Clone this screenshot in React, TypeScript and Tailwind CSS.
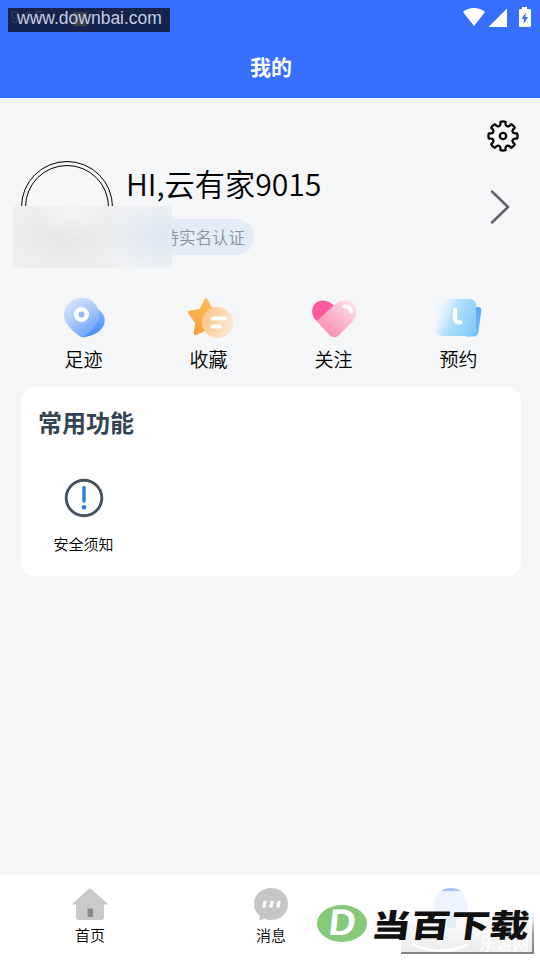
import type { ReactNode } from "react";

const TEETH = 8;

// contour of the settings gear, one tooth after the other
function gearPath() {
    const point = (r: number, deg: number) => {
        const a = ((deg - 90) * Math.PI) / 180;
        return `${(16 + r * Math.cos(a)).toFixed(2)} ${(16 + r * Math.sin(a)).toFixed(2)}`;
    };
    let d = "";
    for (let i = 0; i < TEETH; i++) {
        const c = (i * 360) / TEETH;
        d += `${i === 0 ? "M" : "L"}${point(14.4, c - 10)}`;
        d += `Q${point(15, c)} ${point(14.4, c + 10)}`;
        d += `L${point(12.2, c + 12)}`;
        d += `Q${point(9, c + 22.5)} ${point(12.2, c + 33)}`;
    }
    return d + "Z";
}

function GearIcon() {
    return (
        <svg width="32" height="32" viewBox="0 0 32 32" fill="none" stroke="#050505" strokeWidth="2.300" strokeLinejoin="round">
            <path d={gearPath()} />
            <circle cx="16" cy="16" r="3.2" />
        </svg>
    );
}

function FootprintIcon() {
    return (
        <svg width="50" height="46" viewBox="0 0 50 46">
            <defs>
                <linearGradient id="pinBack" x1="0" y1="0" x2="0" y2="1">
                    <stop offset="0" stopColor="#8fb0f5" />
                    <stop offset="1" stopColor="#3f8bfb" />
                </linearGradient>
                <linearGradient id="pinFront" x1="0.1" y1="0" x2="0.7" y2="1">
                    <stop offset="0" stopColor="#dce9fd" />
                    <stop offset="0.5" stopColor="#abcafa" />
                    <stop offset="1" stopColor="#65a3fb" />
                </linearGradient>
            </defs>
            <path d="M36 13c6 2 10 7 9.700 13-.5 10-11 15-22.500 16.500z" fill="url(#pinBack)" />
            <path d="M5 20C5 10 13 3 23 3s17 7 17 17c0 9-8 16-13.500 21-2 1.800-4 1.800-6 0C14 36 5 29 5 20z" fill="url(#pinFront)" />
            <circle cx="22.500" cy="19.500" r="5.200" fill="#91b7f6" stroke="#fff" strokeWidth="4.600" />
        </svg>
    );
}

function FavoriteIcon() {
    return (
        <svg width="50" height="46" viewBox="0 0 50 46">
            <defs>
                <linearGradient id="starFill" x1="0" y1="0" x2="0" y2="1">
                    <stop offset="0" stopColor="#f9bd58" />
                    <stop offset="1" stopColor="#f7a13b" />
                </linearGradient>
                <linearGradient id="bubbleFill" x1="0" y1="0.2" x2="1" y2="0.6">
                    <stop offset="0" stopColor="#fbc68b" />
                    <stop offset="1" stopColor="#fde5cf" />
                </linearGradient>
            </defs>
            <path d="M22 5L26.500 14L38 16L31 26L31.500 37L21 34L11.500 38.500L13 27.500L5.500 17.500L17 15.500Z" fill="url(#starFill)" stroke="url(#starFill)" strokeWidth="3.500" strokeLinejoin="round" />
            <circle cx="33.500" cy="27.500" r="15.500" fill="url(#bubbleFill)" fillOpacity="0.95" />
            <path d="M28.500 23.500H41M28.500 31.500H36" stroke="#fff" strokeWidth="4" strokeLinecap="round" />
        </svg>
    );
}

function FollowIcon() {
    return (
        <svg width="50" height="46" viewBox="0 0 50 46">
            <defs>
                <linearGradient id="heartFill" x1="0.900" y1="0" x2="0.2" y2="0.800">
                    <stop offset="0" stopColor="#fde6ee" />
                    <stop offset="0.550" stopColor="#fcb7ce" />
                    <stop offset="1" stopColor="#fb91b5" />
                </linearGradient>
            </defs>
            <path d="M7.500 26C1 20 2 9.500 9 6.500c6-2.500 12-.5 17 5L16 24z" fill="#fb599b" />
            <path d="M7.500 26L26 9.500C32 3.500 41 4 45 9.500c4 5.500 3 12-1.500 17L30 40c-3 3-6.500 3-9.500 0z" fill="url(#heartFill)" />
            <path d="M35.500 11.500c4-.5 6 1.500 6.500 5" fill="none" stroke="#fff" strokeWidth="3.600" strokeLinecap="round" />
        </svg>
    );
}

function BookingIcon() {
    return (
        <svg width="50" height="46" viewBox="0 0 50 46">
            <defs>
                <linearGradient id="folderFill" x1="0" y1="0.300" x2="1" y2="0.700">
                    <stop offset="0" stopColor="#e6f4fd" stopOpacity="0.100" />
                    <stop offset="0.400" stopColor="#b5e0fc" />
                    <stop offset="1" stopColor="#83cbfa" />
                </linearGradient>
                <linearGradient id="folderBack" x1="0" y1="0" x2="0" y2="1">
                    <stop offset="0" stopColor="#5aa5f2" />
                    <stop offset="1" stopColor="#75c3fa" />
                </linearGradient>
            </defs>
            <path d="M39 12h5c2.500 0 3.500 1.500 3.200 4l-2.700 21c-.5 3-2 4.500-5 4.500H32z" fill="url(#folderBack)" />
            <rect x="2" y="4" width="40" height="37" rx="6" fill="url(#folderFill)" />
            <path d="M21 14.500v8.500c0 3.500 1.500 4.500 5.500 4.500" fill="none" stroke="#fff" strokeWidth="4.200" strokeLinecap="round" />
        </svg>
    );
}

function Shortcut({ icon, label }: { icon: ReactNode; label: string }) {
    return (
        <div className="flex w-[125px] flex-col items-center">
            {icon}
            <span className="mt-1 text-[19px] leading-7 font-[350] text-black">{label}</span>
        </div>
    );
}

function StatusBar() {
    return (
        <div className="flex h-9 justify-end pr-[9px] pt-[7px]">
            <svg width="70" height="22" viewBox="0 0 70 22" fill="#fff">
                <path d="M2 5C8-.5 18-.5 24 5L13 19z" />
                <path d="M46 1.500V20H27.500z" />
                <path d="M61 0h5v2h2.500c1 0 1.500.500 1.500 1.500v15c0 1-.5 1.500-1.500 1.500h-9c-1 0-1.500-.5-1.500-1.500v-15c0-1 .5-1.500 1.500-1.500H61z" />
                <path d="M65 5l-4.500 7H63l-.5 5 4.500-7h-2.800z" fill="#366ffe" />
            </svg>
        </div>
    );
}

export default function App() {
    return (
        <div className="relative flex h-[960px] w-[540px] flex-col overflow-hidden bg-[#f4f6f8] font-['Noto_Sans_CJK_SC',sans-serif]">
            <header className="h-[98px] bg-[#366ffe]">
                <StatusBar />
                <h1 className="pl-0.5 pt-[15px] text-center text-[21px] leading-[30px] font-bold text-white">我的</h1>
            </header>

            <main className="flex flex-1 flex-col">
                <div className="flex justify-end pr-[21px] pt-[22px]">
                    <GearIcon />
                </div>

                {/* Profil */}
                <section className="mt-2 flex h-[108px] items-start pl-[21px]">
                    <div className="mt-px size-[92px] shrink-0 rounded-full border border-black p-[3px]">
                        <div className="size-full rounded-full border border-black"></div>
                    </div>
                    <div className="ml-[13px] flex flex-col">
                        <p className="mt-[3px] text-[30.2px] leading-10 font-[350] text-black">HI,云有家9015</p>
                        <div className="mt-4 flex h-9 w-32 items-center justify-end rounded-full bg-[#e4ecf8] pr-[9px] text-[16.5px] font-[350] text-[#8b929e]">
                            待实名认证
                        </div>
                    </div>
                    <svg className="mt-[29px] mr-[29px] ml-auto" width="22" height="36" viewBox="0 0 22 36" fill="none" stroke="#626469" strokeWidth="2.500" strokeLinecap="round" strokeLinejoin="round">
                        <path d="M3 2.500L19 18L3 33.500" />
                    </svg>
                </section>

                <nav className="mt-[27px] flex justify-center pl-0.5">
                    <Shortcut icon={<FootprintIcon />} label="足迹" />
                    <Shortcut icon={<FavoriteIcon />} label="收藏" />
                    <Shortcut icon={<FollowIcon />} label="关注" />
                    <Shortcut icon={<BookingIcon />} label="预约" />
                </nav>

                {/* Fonctions courantes */}
                <section className="mt-3.5 ml-[21px] h-[189px] w-[500px] rounded-[14px] bg-white pt-[17px]">
                    <h2 className="pl-[17px] text-[24px] leading-9 font-bold text-[#354452]">常用功能</h2>
                    <div className="mt-[38px] flex w-[125px] flex-col items-center">
                        <svg width="40" height="40" viewBox="0 0 40 40" fill="none">
                            <circle cx="20" cy="20" r="17.800" stroke="#46535f" strokeWidth="2.900" />
                            <path d="M20 9.500v13.500" stroke="#2c7de4" strokeWidth="3.400" strokeLinecap="round" />
                            <circle cx="20" cy="29.300" r="2.300" fill="#2c7de4" />
                        </svg>
                        <span className="mt-[15px] text-[15px] leading-[22px] font-[350] text-black">安全须知</span>
                    </div>
                </section>
            </main>

            <footer className="flex h-[85px] bg-white pt-[11px]">
                <div className="flex w-[180px] flex-col items-center">
                    <svg width="36" height="36" viewBox="0 0 36 36">
                        <path d="M18 2L35 17c.8.8.5 1.500-.5 1.500H32V31c0 2-1 3-3 3H7c-2 0-3-1-3-3V18.500H1.500c-1 0-1.300-.7-.5-1.500z" fill="#c9c9c9" />
                        <rect x="15.500" y="22.500" width="5.500" height="8.500" fill="#8b8b8b" />
                    </svg>
                    <span className="mt-0.5 text-[15px] leading-[22px] font-[350] text-black">首页</span>
                </div>
                <div className="flex w-[180px] flex-col items-center pl-0.5">
                    <svg width="36" height="36" viewBox="0 0 36 36">
                        <path d="M18 2c10 0 17 7 17 16s-7 16-17 16c-2.500 0-5-.5-7-1.500-1.500 1-3 1.500-5 1.500.5-1.500 1-3 .5-4.500C3 26.500 1 22.500 1 18 1 9 8 2 18 2z" fill="#c6c6c6" />
                        <path d="M12.200 15l-1.400 6.500M19.200 15l-1.400 6.500M26.200 15l-1.400 6.500" stroke="#fff" strokeWidth="3.200" />
                    </svg>
                    <span className="mt-0.5 text-[15px] leading-[22px] font-[350] text-black">消息</span>
                </div>
                <div className="flex w-[180px] flex-col items-center pl-0.5">
                    <svg width="36" height="52" viewBox="0 0 36 52">
                        <circle cx="18" cy="19" r="17" fill="#edf4fe" />
                        <path d="M14 28h9v12c0 3-9 3-9 0z" fill="#e6effc" />
                        <path d="M8 5C13 1 23 1 28 5z" fill="#a5c5f1" />
                    </svg>
                </div>
            </footer>

            <div className="absolute top-[206px] left-[13px] h-[62px] w-[159px] bg-[#f0f2f4] bg-[radial-gradient(ellipse_50px_38px_at_148px_30px,#dde6f3,transparent),radial-gradient(ellipse_36px_28px_at_58px_6px,#f3f4f5,transparent),radial-gradient(ellipse_85px_55px_at_52px_28px,#e5e6e8,transparent)]"></div>

            <div className="absolute top-2 left-2 h-6 w-[162px] bg-[#14244c] font-['Liberation_Sans',sans-serif]">
                <span className="absolute top-0 left-0.5 text-[17px] leading-5 text-[#333d50]">9:15</span>
                <span className="absolute top-1 left-[65px] size-3.5 bg-[#3b4048]"></span>
                <span className="absolute top-0 left-[9px] text-[17.5px] leading-5 whitespace-nowrap text-[#c4cce0]">www.downbai.com</span>
            </div>

            {/* Filigranes */}
            <div className="absolute top-[912px] left-[401px] h-[42px] w-[133px] bg-linear-to-b from-transparent to-[#e2e2e2]/70">
                <svg className="absolute inset-0" width="133" height="42" viewBox="0 0 133 42" fill="none">
                    <defs>
                        <linearGradient id="frameEdge" x1="0" y1="0" x2="0" y2="1">
                            <stop offset="0" stopColor="#d0d0d0" stopOpacity="0" />
                            <stop offset="0.5" stopColor="#a0a0a0" />
                            <stop offset="1" stopColor="#808080" />
                        </linearGradient>
                    </defs>
                    <path d="M12 32c14 8 36 9 54 1" stroke="#fff" strokeWidth="2.500" strokeLinecap="round" />
                    <rect x="131" y="0" width="2" height="42" fill="url(#frameEdge)" />
                    <rect x="0" y="40" width="133" height="2" fill="#858585" />
                </svg>
                <span className="absolute right-[5px] bottom-px text-[16.5px] leading-5 font-bold text-white/80">乐游网</span>
            </div>

            <div className="absolute top-[903px] left-[317px] flex items-center">
                <div className="flex h-[37px] w-[50px] items-center justify-center rounded-[50%] bg-[#87c97b] font-['Liberation_Sans',sans-serif] text-[37px] font-bold text-white">
                    <span className="-skew-x-6">D</span>
                </div>
                <span className="ml-[5px] origin-left scale-x-[1.25] -skew-x-6 text-[31.5px] leading-10 font-black whitespace-nowrap text-[#111]">当百下载</span>
            </div>
        </div>
    );
}
